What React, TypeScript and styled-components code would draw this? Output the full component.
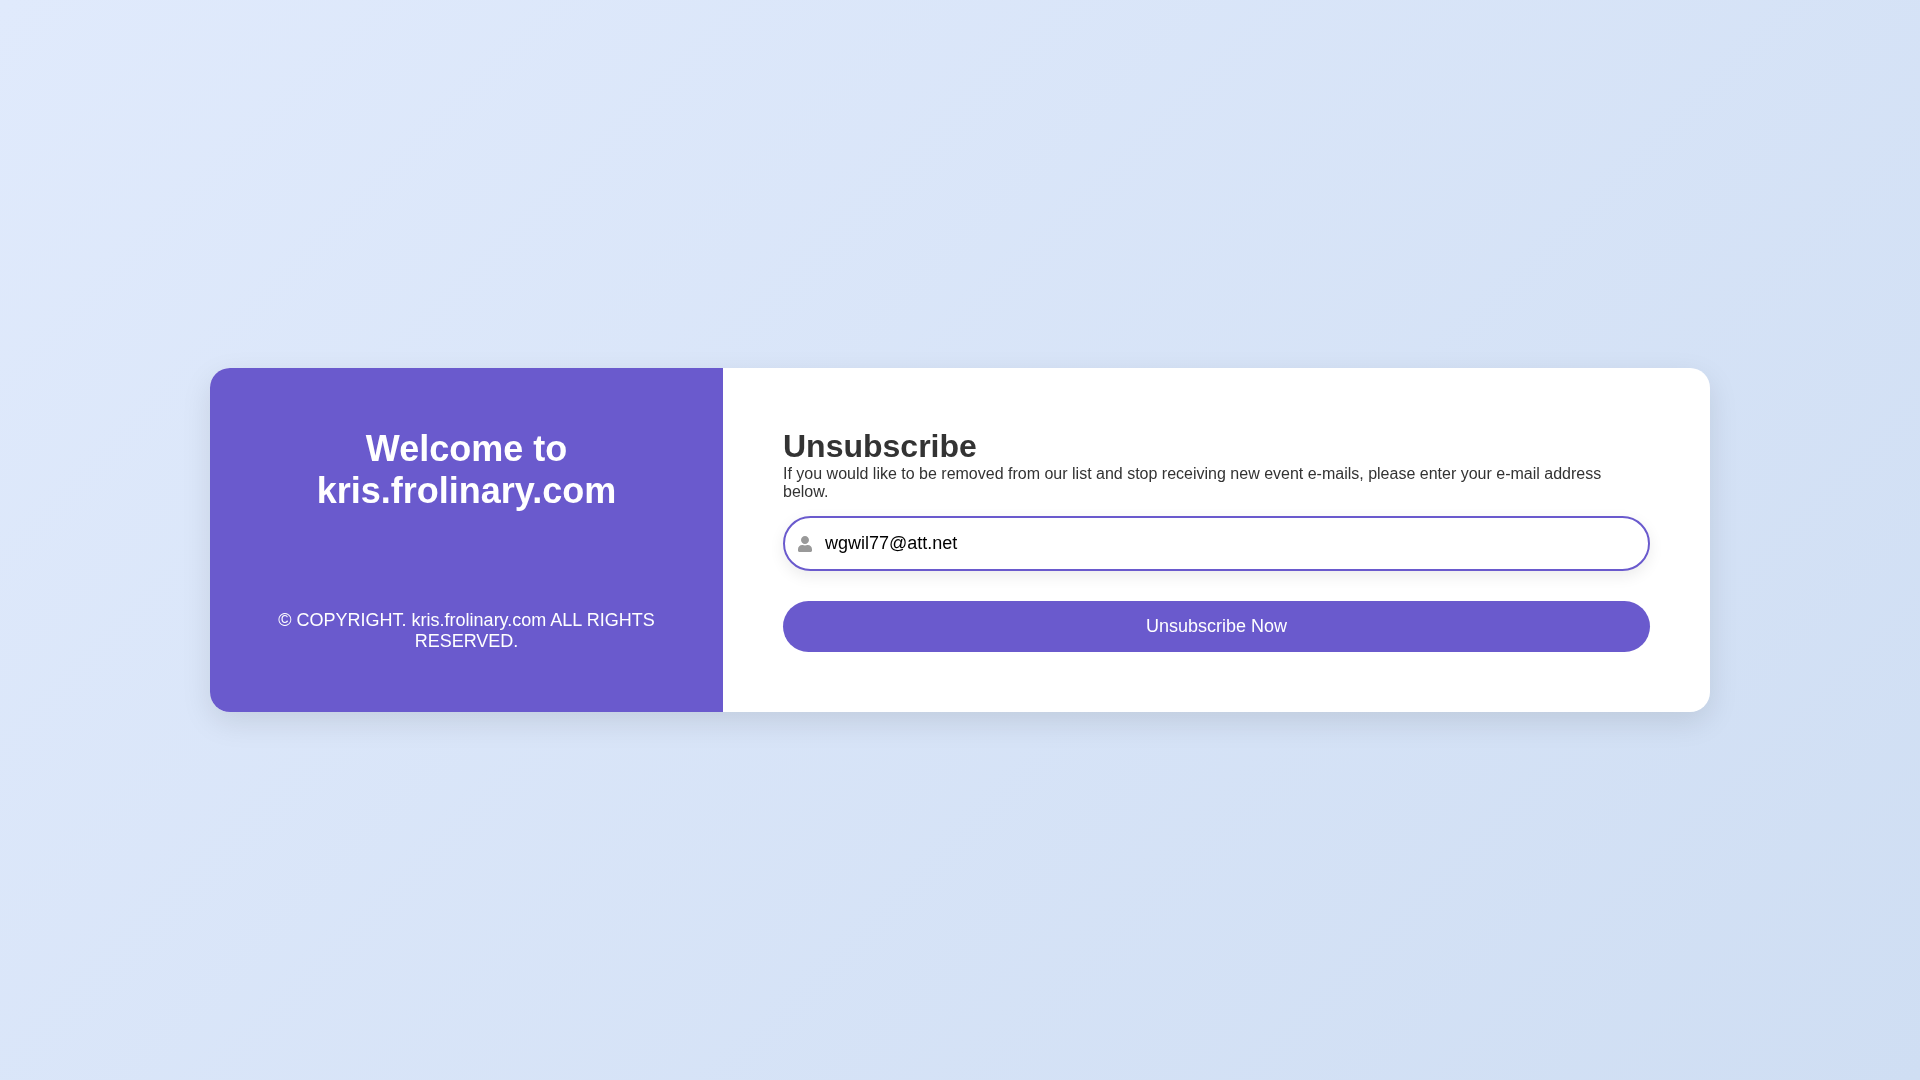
import React from "react";
import styled, { createGlobalStyle } from "styled-components";
import { FaUser } from "react-icons/fa";

const GlobalStyle = createGlobalStyle`
  * {
    box-sizing: border-box;
  }
  html, body {
    margin: 0;
    padding: 0;
    font-family: "Liberation Sans", Arial, sans-serif;
  }
`;

const Page = styled.div`
  min-height: 100vh;
  display: flex;
  align-items: center;
  justify-content: center;
  background: linear-gradient(135deg, #e0eafc, #cfdef3);
`;

const Card = styled.div`
  width: 1500px;
  display: flex;
  background: #fff;
  border-radius: 20px;
  overflow: hidden;
  box-shadow: 0 10px 30px rgba(0, 0, 0, 0.1);
  will-change: transform;
`;

const Side = styled.aside`
  width: 513px;
  flex-shrink: 0;
  padding: 60px;
  display: flex;
  flex-direction: column;
  justify-content: space-between;
  background: #6a5acd;
  color: #fff;
  text-align: center;
`;

const SideTitle = styled.h1`
  margin: 0;
  font-size: 36px;
  font-weight: 700;
`;

const Copyright = styled.p`
  margin: 0;
  font-size: 18px;
`;

const Main = styled.main`
  flex: 1;
  padding: 60px;
  color: #333;
`;

const Title = styled.h2`
  margin: 0;
  font-size: 32px;
  font-weight: 700;
`;

const Intro = styled.p`
  margin: 0 0 15px;
  font-size: 16px;
`;

const Field = styled.label`
  height: 55px;
  margin-bottom: 30px;
  padding: 0 12px;
  display: flex;
  align-items: center;
  gap: 12px;
  border: 2px solid #6a5acd;
  border-radius: 28px;
  background: #fff;
  box-shadow: 0 5px 15px rgba(0, 0, 0, 0.08);
  color: #999;
  font-size: 16px;
`;

const EmailInput = styled.input`
  flex: 1;
  min-width: 0;
  padding: 0;
  border: 0;
  outline: 0;
  background: transparent;
  color: #000;
  font-family: inherit;
  font-size: 18px;
`;

const SubmitButton = styled.button`
  display: block;
  width: 100%;
  height: 51px;
  padding: 0;
  border: 0;
  border-radius: 26px;
  background: #6a5acd;
  color: #fff;
  font-family: inherit;
  font-size: 18px;
  cursor: pointer;
`;

export default function App() {
  return (
    <Page>
      <GlobalStyle />
      <Card>
        <Side>
          <SideTitle>Welcome to kris.frolinary.com</SideTitle>
          <Copyright>© COPYRIGHT. kris.frolinary.com ALL RIGHTS RESERVED.</Copyright>
        </Side>
        <Main>
          <Title>Unsubscribe</Title>
          <Intro>
            If you would like to be removed from our list and stop receiving new event e-mails, please enter your e-mail address below.
          </Intro>
          <Field>
            <FaUser />
            <EmailInput type="email" defaultValue="wgwil77@att.net" />
          </Field>
          <SubmitButton type="button">Unsubscribe Now</SubmitButton>
        </Main>
      </Card>
    </Page>
  );
}
